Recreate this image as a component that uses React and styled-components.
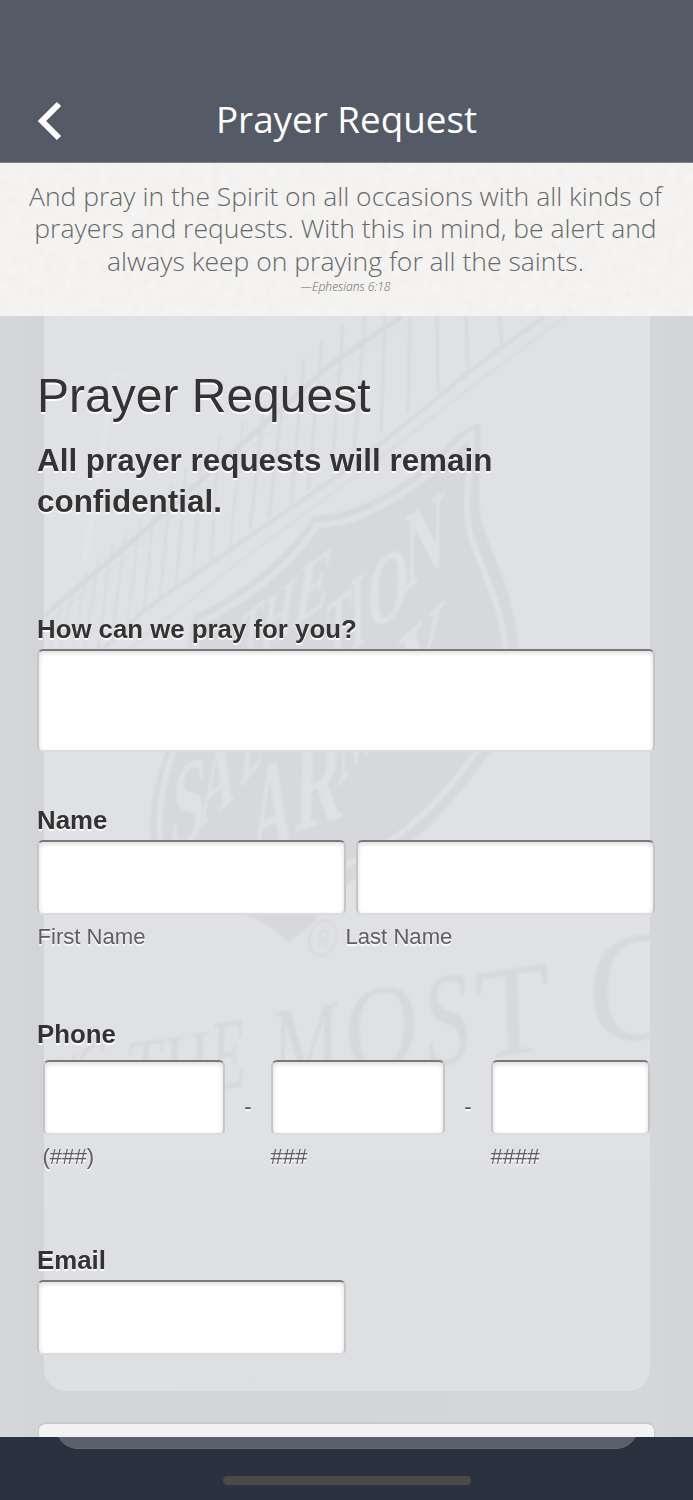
import React, { useState } from "react";
import styled, { createGlobalStyle } from "styled-components";

const GlobalStyle = createGlobalStyle`
  * {
    box-sizing: border-box;
  }
  body {
    margin: 0;
    background: #d5d6da;
    font-family: "Liberation Sans", Arial, sans-serif;
  }
`;

const Screen = styled.div`
  display: flex;
  flex-direction: column;
  width: 693px;
  height: 1500px;
  overflow: hidden;
`;

const Header = styled.header`
  display: grid;
  grid-template-columns: 64px 1fr 64px;
  align-items: center;
  flex: none;
  height: 163px;
  padding: 76px 0 0;
  background: #545b66;
  border-bottom: 1px solid #7d838b;
`;

const BackButton = styled.button`
  display: flex;
  margin: 4px 0 0 37px;
  padding: 0;
  border: 0;
  background: none;
`;

const Title = styled.h1`
  margin: 0;
  color: #fff;
  font: 400 36.8px/50px "Open Sans", sans-serif;
  text-align: center;
  white-space: nowrap;
`;

const Verse = styled.section`
  position: relative;
  flex: none;
  height: 153px;
  padding: 17px 2px 0 0;
  background: #f5f4f2;
  color: #686868;
  font-family: "Open Sans", sans-serif;
  text-align: center;
`;

const Paper = styled.svg`
  position: absolute;
  inset: 0;
  width: 100%;
  height: 100%;
`;

const VerseText = styled.p`
  position: relative;
  margin: 0;
  font-size: 26.5px;
  font-weight: 300;
  line-height: 32.4px;
  white-space: nowrap;
`;

const VerseSource = styled.p`
  position: relative;
  margin: 0;
  font-size: 12.1px;
  font-style: italic;
  font-weight: 300;
  line-height: 19px;
`;

const Content = styled.main`
  position: relative;
  flex: none;
  height: 1121px;
  padding: 0 38px;
  overflow: hidden;
  background: linear-gradient(90deg, #d6d7da, #d3d4d8 6%, #d5d6da 94%, #d3d4d8);
`;

const Backdrop = styled.svg`
  position: absolute;
  top: 0;
  left: 44px;
  width: 606px;
  height: 1075px;
  border-radius: 0 0 22px 22px;
  background: linear-gradient(#e0e1e5, #e0e1e5 75%, #dddfe2);
`;

const Form = styled.form`
  position: relative;
  display: flex;
  flex-direction: column;
  height: 100%;
  color: #333;
  text-shadow: 0 2px 1px #fff;
`;

const Heading = styled.h2`
  margin: 50px 0 0 -1px;
  font-size: 48px;
  font-weight: 400;
  line-height: 60px;
`;

const Notice = styled.p`
  margin: 15px 0 0 -1px;
  font-size: 31.4px;
  font-weight: 700;
  line-height: 40.5px;
`;

const Field = styled.div`
  display: flex;
  flex-direction: column;
  margin-top: ${({ gap }) => gap}px;
`;

const Label = styled.label`
  height: ${({ tall }) => (tall ? 41 : 35)}px;
  margin-left: -1px;
  font-size: 25.8px;
  font-weight: 700;
  line-height: 30px;
`;

const Row = styled.div`
  display: flex;
  padding: ${({ inset }) => (inset ? "0 5px 0 5px" : 0)};
`;

const Column = styled.div`
  display: flex;
  flex: none;
  flex-direction: column;
  width: ${({ width }) => width}px;
`;

const TextInput = styled.input`
  width: ${({ width }) => (width ? `${width}px` : "100%")};
  height: 75px;
  margin: 0 0 0 ${({ indent }) => indent || 0}px;
  padding: 8px 12px;
  border: 2px solid #c6c6c6;
  border-top-color: #79797a;
  border-bottom-color: #dcdcdc;
  border-radius: 6px;
  background: #fff;
  box-shadow: inset 0 2px 5px rgba(0, 0, 0, 0.14);
  font-size: 25px;
  outline: none;
`;

const TextBox = styled(TextInput).attrs({ as: "textarea" })`
  width: 618px;
  height: 103px;
  margin-left: -1px;
  resize: none;
`;

const Hint = styled.span`
  margin: 9px 0 0 -0.5px;
  color: #5f5f5f;
  font-size: 22.1px;
  line-height: 26px;
`;

const Dash = styled.span`
  flex: none;
  width: 46px;
  padding: 33px 0 0;
  color: #555;
  font-size: 22px;
  line-height: 28px;
  text-align: center;
`;

const NextCard = styled.div`
  flex: none;
  height: 40px;
  margin-top: 67px;
  border: 1px solid #c9c9c9;
  border-width: 2px 1px;
  border-radius: 8px;
  background: #f2f2f2;
`;

const Footer = styled.footer`
  display: flex;
  flex: none;
  flex-direction: column;
  align-items: center;
  height: 63px;
  overflow: hidden;
  background: #2b323f;
`;

const Tray = styled.div`
  width: 582px;
  height: 24px;
  margin-top: -12px;
  border: 1px solid #666d78;
  border-width: 0 0 1px;
  border-radius: 0 0 22px 22px;
  background: #5a616d;
`;

const HomeBar = styled.div`
  width: 248px;
  height: 9px;
  margin-top: 27px;
  border-radius: 5px;
  background: #4a4a48;
`;

// x of the picket head, y of the head, x and y where it meets the beam
const pickets = [
  [62, 607, 49, 650],
  [73, 590, 60, 650],
  [86, 574, 73, 650],
  [99, 558, 84, 650],
  [112, 545, 98, 650],
  [126, 530, 112, 638],
  [140, 520, 127, 629],
  [155, 499, 144, 611],
  [171, 483, 160, 597],
  [186, 468, 176, 588],
  [202, 451, 193, 575],
  [219, 436, 211, 560],
  [243, 421, 230, 547],
  [264, 405, 250, 530],
  [286, 375, 269, 517],
  [304, 358, 291, 504],
  [322, 340, 308, 490],
  [343, 325, 332, 469],
  [365, 316, 354, 451],
  [385, 316, 381, 433],
  [410, 316, 408, 412],
  [437, 316, 438, 392],
  [466, 316, 468, 368],
  [499, 316, 502, 345],
];

// letter, matrix used to lay it on the tilted crest
const crestLetters = [
  ["T", "0.52 -0.4 -0.1 1.1 238 664"],
  ["H", "0.6 -0.5 -0.2 1.3 258 658"],
  ["E", "0.78 -0.55 -0.25 1.4 291 629"],
  ["T", "0.6 -0.45 -0.05 1.5 324 672"],
  ["I", "0.6 -0.4 0 1.6 350 652"],
  ["O", "0.82 -0.42 -0.05 1.55 366 632"],
  ["N", "0.85 -0.6 -0.02 1.7 404 592"],
  ["S", "0.95 -0.4 -0.15 1.9 168 852"],
  ["A", "0.75 -0.65 -0.1 1.6 198 830"],
  ["L", "0.5 -0.6 -0.1 1.6 240 788"],
  ["A", "0.85 -0.3 0 2.1 252 862"],
  ["R", "1 -0.3 -0.05 2 294 832"],
  ["M", "0.7 -0.8 -0.05 1.9 337 788"],
  ["Y", "1 -0.9 -0.1 2 394 728"],
];

const mottoLetters = [
  ["N", "0.6 -0.12 -0.05 0.8 52 1090"],
  ["G", "0.75 -0.12 -0.05 1.05 76 1087"],
  ["T", "1 -0.15 -0.08 1.4 126 1097"],
  ["H", "1.1 -0.18 -0.08 1.5 162 1096"],
  ["E", "0.95 -0.15 -0.05 1.75 211 1091"],
  ["M", "1.3 -0.2 -0.03 1.95 272 1087"],
  ["O", "1.75 -0.25 0 2.05 345 1072"],
  ["S", "1.5 -0.2 0 2.3 424 1067"],
  ["T", "2.1 -0.32 0.08 2.25 477 1060"],
  ["C", "2.4 -0.25 0 2.7 588 1044"],
];

const SHIELD =
  "M313 516 C365 516 424 472 450 442 Q476 419 481 426 C481 470 476 499 482 522 C490 552 515 592 518 648 C520 690 508 728 490 752 C460 795 433 825 413 840 C385 860 330 889 316 920 L289 943 Q270 925 250 916 C205 902 158 883 151 842 C148 814 154 782 166 752 C182 710 184 650 194 615 C222 604 282 566 313 516 Z";
const SHIELD_INNER =
  "M317 525 C365 525 427 481 452 452 Q467 436 472 434 C470 477 464 500 469 529 C477 562 503 604 505 648 C507 688 494 724 476 752 C447 793 421 819 397 836 C366 857 320 876 306 891 L289 902 Q270 895 254 890 C211 882 167 875 160 842 C157 812 163 782 173 752 C189 710 192 657 201 622 C229 609 287 574 317 525 Z";

const WallArt = () => (
  <Backdrop viewBox="44 316 606 1075" aria-hidden="true">
    <defs>
      <filter id="soft" x="-5%" y="-5%" width="110%" height="110%">
        <feGaussianBlur stdDeviation="0.8" />
      </filter>
    </defs>
    <g filter="url(#soft)" fill="none">
      <path d="M44 616 L130 543 L250 437 L330 365 L402 316" stroke="#d6d8db" strokeWidth="5" />
      <path d="M44 626 L130 554 L250 449 L332 376 L422 316" stroke="#dcdde0" strokeWidth="2" />
      <path d="M100 652 L143 611 L230 550 L365 457 L470 371 L545 316" stroke="#d7d9dc" strokeWidth="4" />
      <path d="M125 652 L240 561 L370 466 L478 382 L566 316" stroke="#dadbdf" strokeWidth="2.5" />
      <path d="M85 560 C97 480 108 430 111 382 Q117 366 128 379" stroke="#e3e4e7" strokeWidth="5" />
      {pickets.map(([x1, y1, x2, y2]) => (
        <path
          key={x1}
          d={`M${x1} ${y1} L${x2} ${y2}`}
          stroke="#d7d9dc"
          strokeWidth={x1 > 250 ? 3 : 2}
        />
      ))}
    </g>
    <g filter="url(#soft)">
      <path d={SHIELD} fill="#d6d8db" />
      <path d={SHIELD_INNER} fill="#d6d8db" stroke="#e0e1e5" strokeWidth="6" />
      <g fill="#e0e1e5" fontFamily="Liberation Serif, serif" fontWeight="700" fontSize="66">
        {crestLetters.map(([char, matrix]) => (
          <text key={matrix} transform={`matrix(${matrix})`}>
            {char}
          </text>
        ))}
      </g>
      <g fill="#d7d8dc" fontFamily="Liberation Serif, serif" fontSize="58">
        {mottoLetters.map(([char, matrix]) => (
          <text key={matrix} transform={`matrix(${matrix})`}>
            {char}
          </text>
        ))}
      </g>
      <ellipse
        cx="323"
        cy="938"
        rx="13"
        ry="18"
        transform="rotate(18 323 938)"
        fill="none"
        stroke="#d7d8dc"
        strokeWidth="2"
      />
      <text
        transform="matrix(0.8 -0.15 -0.15 1.2 316 949)"
        fill="#d7d8dc"
        fontFamily="Liberation Sans, sans-serif"
        fontSize="22"
      >
        R
      </text>
    </g>
  </Backdrop>
);

const phoneParts = [
  { id: "area", width: 182, hint: "(###)" },
  { id: "prefix", width: 174, hint: "###" },
  { id: "line", width: 159, hint: "####" },
];

const App = () => {
  const [values, setValues] = useState({});

  const bind = (name) => ({
    id: name,
    value: values[name] || "",
    onChange: (e) => setValues({ ...values, [name]: e.target.value }),
  });

  return (
    <Screen>
      <GlobalStyle />
      <Header>
        <BackButton aria-label="Back">
          <svg width="26" height="40" viewBox="0 0 26 40">
            <path d="M22 3 L5 20 L22 37" fill="none" stroke="#fff" strokeWidth="6" />
          </svg>
        </BackButton>
        <Title>Prayer Request</Title>
      </Header>
      <Verse>
        <Paper aria-hidden="true">
          <filter id="grain">
            <feTurbulence type="fractalNoise" baseFrequency="0.09" numOctaves="4" />
            <feColorMatrix values="0 0 0 0 0.6  0 0 0 0 0.58  0 0 0 0 0.54  0.18 0 0 0 -0.06" />
          </filter>
          <rect width="100%" height="100%" filter="url(#grain)" />
        </Paper>
        <VerseText>
          And pray in the Spirit on all occasions with all kinds of
          <br />
          prayers and requests. With this in mind, be alert and
          <br />
          always keep on praying for all the saints.
        </VerseText>
        <VerseSource>—Ephesians 6:18</VerseSource>
      </Verse>
      <Content>
        <WallArt />
        <Form>
          <Heading>Prayer Request</Heading>
          <Notice>
            All prayer requests will remain
            <br />
            confidential.
          </Notice>
          <Field gap={91.5}>
            <Label htmlFor="request">How can we pray for you?</Label>
            <TextBox {...bind("request")} />
          </Field>
          <Field gap={53.5}>
            <Label htmlFor="first">Name</Label>
            <Row>
              <Column width={308}>
                <TextInput {...bind("first")} width={309} indent={-1} />
                <Hint>First Name</Hint>
              </Column>
              <Column width={309}>
                <TextInput {...bind("last")} width={299} indent={10} />
                <Hint>Last Name</Hint>
              </Column>
            </Row>
          </Field>
          <Field gap={69}>
            <Label htmlFor="area" tall>
              Phone
            </Label>
            <Row inset>
              {phoneParts.map(({ id, width, hint }, i) => (
                <React.Fragment key={id}>
                  {i > 0 && <Dash>-</Dash>}
                  <Column width={width}>
                    <TextInput {...bind(id)} />
                    <Hint>{hint}</Hint>
                  </Column>
                </React.Fragment>
              ))}
            </Row>
          </Field>
          <Field gap={74.5}>
            <Label htmlFor="email">Email</Label>
            <TextInput {...bind("email")} width={309} indent={-1} />
          </Field>
          <NextCard />
        </Form>
      </Content>
      <Footer>
        <Tray />
        <HomeBar />
      </Footer>
    </Screen>
  );
};

export default App;
